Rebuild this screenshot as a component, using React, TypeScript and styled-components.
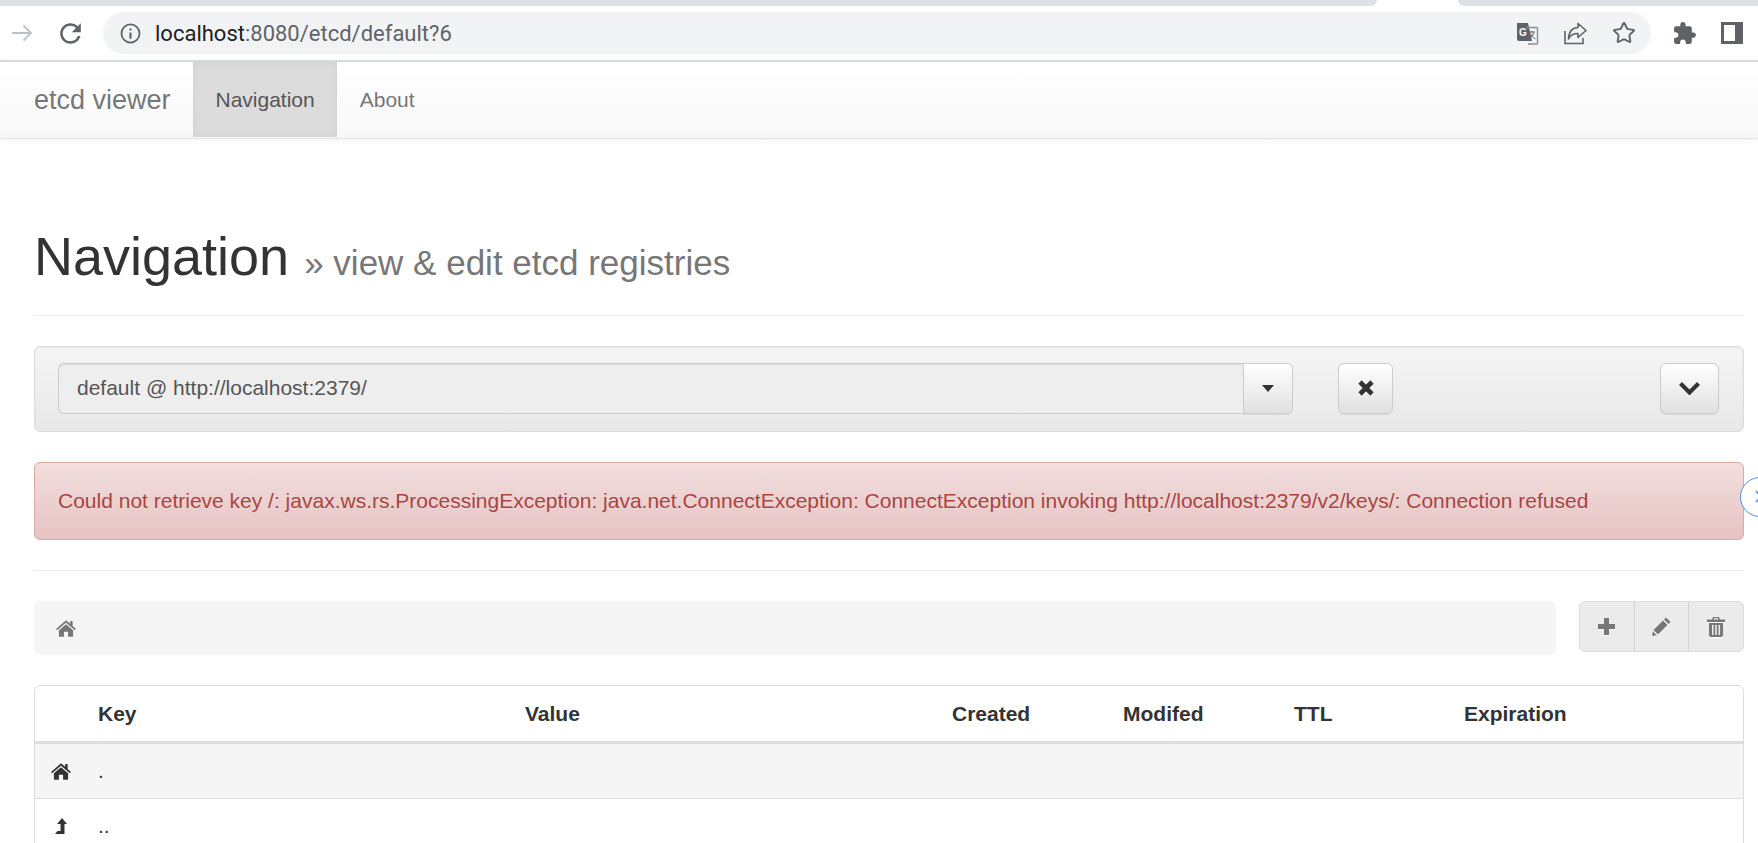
import * as React from 'react';
import styled, { createGlobalStyle } from 'styled-components';
import { Star } from 'lucide-react';

const GlobalStyle = createGlobalStyle`
  html, body {
    margin: 0;
    padding: 0;
    width: 1758px;
    height: 843px;
    overflow: hidden;
    background: #fff;
  }
  body {
    font-family: 'Liberation Sans', Arial, sans-serif;
    font-size: 21px;
    color: #333;
  }
`;

const Page = styled.div`
  position: relative;
  width: 1758px;
  height: 843px;
  overflow: hidden;
`;

/* browser chrome */
const TabStrip = styled.div`
  display: flex;
  justify-content: space-between;
  height: 6px;
`;

const TabEdge = styled.div<{ $side: 'left' | 'right' }>`
  width: ${(p) => (p.$side === 'left' ? '1377px' : '300px')};
  background: #dee1e6;
  border-bottom-${(p) => (p.$side === 'left' ? 'right' : 'left')}-radius: 8px;
`;

const Toolbar = styled.div`
  display: flex;
  align-items: center;
  height: 54px;
  padding-left: 7px;
  border-bottom: 2px solid #dadce0;
  color: #5f6368;
`;

const ToolIcon = styled.span<{ $w: number; $muted?: boolean }>`
  display: flex;
  align-items: center;
  justify-content: center;
  width: ${(p) => p.$w}px;
  height: 32px;
  color: ${(p) => (p.$muted ? '#bdc1c6' : '#5f6368')};
`;

const Omnibox = styled.div`
  display: flex;
  align-items: center;
  width: 1548px;
  height: 42px;
  margin-right: 9px;
  padding: 0 15px 0 17px;
  box-sizing: border-box;
  border-radius: 21px;
  background: #f1f3f4;
`;

const Url = styled.div`
  margin-left: 14px;
  font-family: Roboto, 'Liberation Sans', sans-serif;
  font-size: 22px;
  color: #5f6368;
  white-space: nowrap;
  b {
    font-weight: 400;
    color: #202124;
  }
`;

const OmniActions = styled.div`
  display: flex;
  align-items: center;
  gap: 25px;
  margin-left: auto;
`;

/* app navbar */
const Navbar = styled.nav`
  display: flex;
  height: 76px;
  padding-left: 34px;
  background: linear-gradient(to bottom, #ffffff 0%, #f8f8f8 100%);
  border-bottom: 1px solid #e4e4e4;
  box-shadow: 0 1px 8px rgba(0, 0, 0, 0.05);
`;

const Brand = styled.div`
  display: flex;
  align-items: center;
  width: 159px;
  font-size: 27px;
  color: #777;
`;

const NavLink = styled.div<{ $active?: boolean }>`
  display: flex;
  align-items: center;
  height: 75px;
  padding: 0 22.5px;
  color: ${(p) => (p.$active ? '#555' : '#777')};
  background: ${(p) => (p.$active ? '#dcdcdc' : 'transparent')};
  box-shadow: ${(p) => (p.$active ? 'inset 0 0 8px rgba(0, 0, 0, 0.06)' : 'none')};
`;

/* page body */
const Content = styled.main`
  padding: 0 14px 0 34px;
`;

const PageHeader = styled.div`
  padding: 87px 0 22px;
  border-bottom: 1px solid #eee;
`;

const Title = styled.h1`
  margin: 0;
  font-size: 54px;
  line-height: 60px;
  font-weight: 400;
  color: #333;
  small {
    font-size: 35px;
    font-weight: 400;
    color: #777;
  }
`;

const Well = styled.div`
  display: flex;
  align-items: center;
  height: 86px;
  margin-top: 30px;
  padding: 0 24px 2px 23px;
  box-sizing: border-box;
  border: 1px solid #dcdcdc;
  border-radius: 6px;
  background: linear-gradient(to bottom, #f5f5f5 0%, #e8e8e8 100%);
  box-shadow: inset 0 1px 3px rgba(0, 0, 0, 0.05), 0 1px 0 rgba(255, 255, 255, 0.1);
`;

const Combo = styled.div`
  display: flex;
  width: 1235px;
  height: 51px;
`;

const ComboValue = styled.div`
  flex: 1;
  display: flex;
  align-items: center;
  padding-left: 18px;
  border: 1px solid #ccc;
  border-right: 0;
  border-radius: 6px 0 0 6px;
  background: #eee;
  box-shadow: inset 0 1px 1px rgba(0, 0, 0, 0.075);
  color: #555;
`;

const GradientButton = styled.div<{ $w: number; $group?: boolean }>`
  display: flex;
  align-items: center;
  justify-content: center;
  width: ${(p) => p.$w}px;
  height: 51px;
  box-sizing: border-box;
  border: 1px solid #ccc;
  border-radius: ${(p) => (p.$group ? '0 6px 6px 0' : '6px')};
  background: linear-gradient(to bottom, #ffffff 0%, #e0e0e0 100%);
  box-shadow: inset 0 1px 0 rgba(255, 255, 255, 0.15), 0 1px 1px rgba(0, 0, 0, 0.075);
  color: #333;
`;

const ClearSlot = styled.div`
  margin-left: 45px;
`;

const ExpandSlot = styled.div`
  margin-left: auto;
`;

const Caret = styled.span`
  width: 0;
  height: 0;
  border-top: 7px solid #333;
  border-left: 6.5px solid transparent;
  border-right: 6.5px solid transparent;
`;

const Alert = styled.div`
  display: flex;
  align-items: center;
  height: 78px;
  margin-top: 30px;
  padding-left: 23px;
  box-sizing: border-box;
  border: 1px solid #dca7a7;
  border-radius: 6px;
  background: linear-gradient(to bottom, #f2dede 0%, #e7c3c3 100%);
  color: #a94442;
  text-shadow: 0 1px 0 rgba(255, 255, 255, 0.2);
  white-space: nowrap;
`;

const Divider = styled.hr`
  height: 1px;
  margin: 30px 0;
  border: 0;
  background: #eee;
`;

const PathRow = styled.div`
  display: flex;
  justify-content: space-between;
  align-items: flex-start;
`;

const Breadcrumb = styled.div`
  display: flex;
  align-items: center;
  width: 1522px;
  height: 54px;
  padding-left: 22px;
  box-sizing: border-box;
  border-radius: 6px;
  background: #f5f5f5;
  color: #777;
`;

const ActionGroup = styled.div`
  display: flex;
  width: 165px;
  height: 51px;
  box-sizing: border-box;
  border: 1px solid #ddd;
  border-radius: 6px;
  background: #ebebeb;
  color: #777;
`;

const ActionButton = styled.div`
  flex: 1;
  display: flex;
  align-items: center;
  justify-content: center;
  & + & {
    border-left: 1px solid #d4d4d4;
  }
`;

const TableCard = styled.div`
  margin-top: 30px;
  border: 1px solid #ddd;
  border-radius: 6px;
`;

const Row = styled.div<{ $head?: boolean; $shaded?: boolean }>`
  display: grid;
  grid-template-columns: 63px 427px 427px 171px 171px 170px 1fr;
  align-items: center;
  height: ${(p) => (p.$head ? '55px' : '54px')};
  border-bottom: ${(p) => (p.$head ? '3px solid #ddd' : '1px solid #ddd')};
  background: ${(p) => (p.$shaded ? '#f5f5f5' : 'transparent')};
  font-weight: ${(p) => (p.$head ? 700 : 400)};
  color: #333;
`;

const IconCell = styled.div`
  display: flex;
  justify-content: center;
  padding-right: 11px;
  color: #333;
`;

const ScrollHint = styled.div`
  position: absolute;
  left: 1740px;
  top: 477px;
  width: 40px;
  height: 40px;
  box-sizing: border-box;
  border: 1.5px solid #4a90f0;
  border-radius: 50%;
  background: #fff;
  color: #4a90f0;
`;

const Glyph = styled.svg`
  display: block;
  filter: drop-shadow(0 1px 0 rgba(255, 255, 255, 0.9));
`;

const HomeIcon = () => (
  <Glyph width="20" height="17" viewBox="0 0 24 20" fill="currentColor">
    <path d="M12 0 L0 10.5 L1.4 12 L12 3 L22.6 12 L24 10.5 L20 7 V1 H17 V4.4 Z" />
    <path d="M12 5 L3.5 12.2 V20 H9.5 V14 H14.5 V20 H20.5 V12.2 Z" />
  </Glyph>
);

const TranslateIcon = () => (
  <svg width="23" height="23" viewBox="0 0 23 23" fill="none">
    <path d="M1 1 H12 L16 19 H3 Q1 19 1 17 Z" fill="#5f6368" />
    <path d="M10 5.5 H20.5 Q21.5 5.5 21.5 6.5 V21 Q21.5 22 20.5 22 H12" stroke="#8a8d91" strokeWidth="1.4" />
    <text x="3" y="14" fontFamily="'Liberation Sans', sans-serif" fontWeight="700" fontSize="10" fill="#fff">G</text>
    <path d="M13 10 H19 M16 9 V10.5 M18 10.5 Q16.5 15 13.5 16.5 M14.5 11.5 Q16 15 19.5 17" stroke="#5f6368" strokeWidth="1" />
  </svg>
);

export default function App() {
  return (
    <Page>
      <GlobalStyle />
      <TabStrip>
        <TabEdge $side="left" />
        <TabEdge $side="right" />
      </TabStrip>
      <Toolbar>
        <ToolIcon $w={30} $muted>
          <svg width="22" height="22" viewBox="0 0 22 22" fill="none" stroke="currentColor" strokeWidth="1.8">
            <path d="M1 11 H20 M12.5 3.5 L20 11 L12.5 18.5" />
          </svg>
        </ToolIcon>
        <ToolIcon $w={66}>
          <svg width="31" height="31" viewBox="0 0 24 24" fill="currentColor">
            <path d="M17.65 6.35A7.958 7.958 0 0 0 12 4c-4.42 0-7.99 3.58-7.99 8s3.57 8 7.99 8c3.73 0 6.84-2.55 7.73-6h-2.08A5.99 5.99 0 0 1 12 18c-3.31 0-6-2.69-6-6s2.69-6 6-6c1.66 0 3.14.69 4.22 1.78L13 11h7V4l-2.35 2.35z" />
          </svg>
        </ToolIcon>
        <Omnibox>
          <svg width="21" height="21" viewBox="0 0 20 20" fill="none" stroke="#5f6368" strokeWidth="1.7">
            <circle cx="10" cy="10" r="8.6" />
            <path d="M10 9 V15 M10 5.2 V7.2" strokeWidth="2" />
          </svg>
          <Url>
            <b>localhost</b>:8080/etcd/default?6
          </Url>
          <OmniActions>
            <TranslateIcon />
            <svg width="23" height="23" viewBox="0 0 23 23" fill="none" stroke="#5f6368" strokeWidth="1.6">
              <path d="M1 9 V21.5 H19 V16" />
              <path d="M14 1.5 L22 8.5 L14 15.5 V11.5 Q7 11.5 4.5 17 Q5 6 14 5.5 Z" strokeLinejoin="round" />
            </svg>
            <Star size={24} color="#5f6368" strokeWidth={1.9} />
          </OmniActions>
        </Omnibox>
        <ToolIcon $w={48}>
          <svg width="25" height="25" viewBox="0 0 24 24" fill="currentColor">
            <path d="M20.5 11H19V7c0-1.1-.9-2-2-2h-4V3.5C13 2.12 11.88 1 10.5 1S8 2.12 8 3.5V5H4c-1.1 0-1.99.9-1.99 2v3.8H3.5c1.49 0 2.7 1.21 2.7 2.7s-1.21 2.7-2.7 2.7H2V20c0 1.1.9 2 2 2h3.8v-1.5c0-1.49 1.21-2.7 2.7-2.7 1.49 0 2.7 1.21 2.7 2.7V22H17c1.1 0 2-.9 2-2v-4h1.5c1.38 0 2.5-1.12 2.5-2.5S21.88 11 20.5 11z" />
          </svg>
        </ToolIcon>
        <ToolIcon $w={48}>
          <svg width="22" height="22" viewBox="0 0 22 22" fill="currentColor">
            <path d="M0 0 H22 V22 H0 Z M3 3 V19 H14 V3 Z" fillRule="evenodd" />
          </svg>
        </ToolIcon>
      </Toolbar>

      <Navbar>
        <Brand>etcd viewer</Brand>
        <NavLink $active>Navigation</NavLink>
        <NavLink>About</NavLink>
      </Navbar>

      <Content>
        <PageHeader>
          <Title>
            Navigation <small>» view &amp; edit etcd registries</small>
          </Title>
        </PageHeader>

        <Well>
          <Combo>
            <ComboValue>default @ http://localhost:2379/</ComboValue>
            <GradientButton $w={50} $group>
              <Caret />
            </GradientButton>
          </Combo>
          <ClearSlot>
            <GradientButton $w={55}>
              <Glyph width="16" height="16" viewBox="0 0 16 16" fill="none" stroke="currentColor" strokeWidth="4.6">
                <path d="M2 2 L14 14 M14 2 L2 14" />
              </Glyph>
            </GradientButton>
          </ClearSlot>
          <ExpandSlot>
            <GradientButton $w={59}>
              <Glyph width="21" height="15" viewBox="0 0 21 15" fill="none" stroke="currentColor" strokeWidth="4.2">
                <path d="M1.5 2.5 L10.5 11.5 L19.5 2.5" />
              </Glyph>
            </GradientButton>
          </ExpandSlot>
        </Well>

        <Alert>
          Could not retrieve key /: javax.ws.rs.ProcessingException: java.net.ConnectException: ConnectException invoking
          http://localhost:2379/v2/keys/: Connection refused
        </Alert>

        <Divider />

        <PathRow>
          <Breadcrumb>
            <HomeIcon />
          </Breadcrumb>
          <ActionGroup>
            <ActionButton>
              <Glyph width="17" height="17" viewBox="0 0 17 17" fill="none" stroke="currentColor" strokeWidth="5">
                <path d="M8.5 0 V17 M0 8.5 H17" />
              </Glyph>
            </ActionButton>
            <ActionButton>
              <Glyph width="19" height="19" viewBox="0 0 19 19" fill="currentColor">
                <path d="M14 0.5 L18.5 5 L16.5 7 L12 2.5 Z M11 3.5 L15.5 8 L6 17.5 L1.5 13 Z M0.8 14.3 L4.7 18.2 L0 19 Z" />
              </Glyph>
            </ActionButton>
            <ActionButton>
              <Glyph width="18" height="20" viewBox="0 0 18 20" fill="currentColor">
                <path d="M6 0 H12 L13 2.5 H18 V5 H0 V2.5 H5 Z M7 1.2 L6.6 2.5 H11.4 L11 1.2 Z" fillRule="evenodd" />
                <path d="M2 6 H16 V18 Q16 20 14 20 H4 Q2 20 2 18 Z M5 8 V18 H6.5 V8 Z M8.3 8 V18 H9.8 V8 Z M11.6 8 V18 H13.1 V8 Z" fillRule="evenodd" />
              </Glyph>
            </ActionButton>
          </ActionGroup>
        </PathRow>

        <TableCard>
          <Row $head>
            <span />
            <span>Key</span>
            <span>Value</span>
            <span>Created</span>
            <span>Modifed</span>
            <span>TTL</span>
            <span>Expiration</span>
          </Row>
          <Row $shaded>
            <IconCell>
              <HomeIcon />
            </IconCell>
            <span>.</span>
          </Row>
          <Row>
            <IconCell>
              <Glyph width="12" height="16" viewBox="0 0 12 16" fill="currentColor">
                <path d="M7 0 L12 6 H9.5 V16 H0 L2.5 13 H5.5 V6 H2 Z" />
              </Glyph>
            </IconCell>
            <span>..</span>
          </Row>
        </TableCard>
      </Content>

      <ScrollHint>
        <svg width="24" height="37" viewBox="0 0 24 37" fill="none" stroke="currentColor" strokeWidth="1.6">
          <path d="M15 13 L20 18.5 L15 24" />
        </svg>
      </ScrollHint>
    </Page>
  );
}
